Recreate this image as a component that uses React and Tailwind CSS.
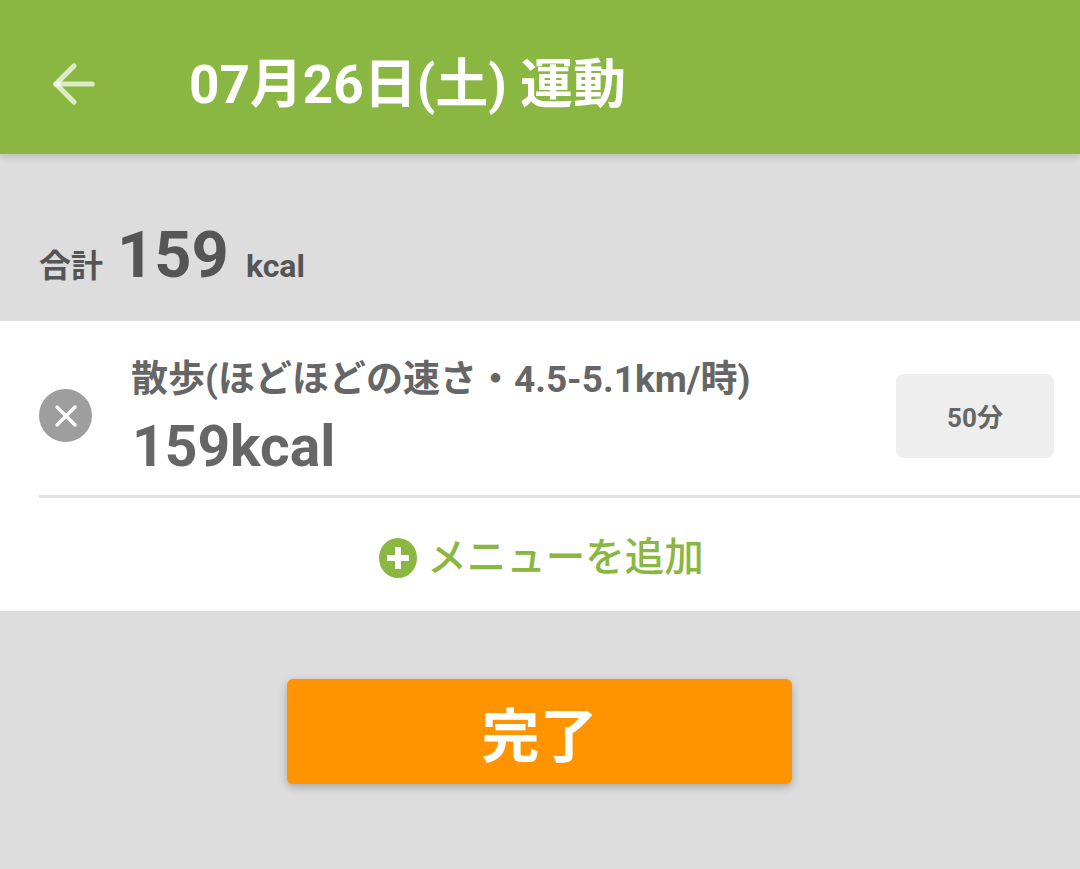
import { ArrowLeft } from "lucide-react";

const fontStack = "font-['Roboto','Noto_Sans_CJK_JP',sans-serif]";

export default function App() {
  return (
    <div className={`${fontStack} flex h-[869px] w-[1080px] flex-col overflow-hidden bg-[#dddddd]`}>
      {/* Header */}
      <header className="relative z-10 flex h-[154px] shrink-0 items-center bg-[#8ab742] shadow-[0_3px_8px_rgba(0,0,0,0.15)]">
        <div className="flex w-[189px] shrink-0 pl-[43px] pt-[14px]">
          <ArrowLeft size={62} strokeWidth={2} className="text-white/70" />
        </div>
        <h1 className="pt-[16px] text-[53px] font-bold leading-none text-white">07月26日(土) 運動</h1>
      </header>

      {/* Total */}
      <div className="flex h-[167px] shrink-0 items-baseline pl-[39px] pt-[69px] font-bold text-[#555555]">
        <span className="text-[32px]">合計</span>
        <span className="ml-[14px] text-[65px] leading-none">159</span>
        <span className="ml-[17px] text-[32px]">kcal</span>
      </div>

      {/* List */}
      <section className="bg-white">
        <div className="flex h-[174px] items-center pl-[39px] pr-[26px] pt-[15px]">
          <button className="flex h-[53px] w-[53px] shrink-0 items-center justify-center rounded-full bg-[#9e9e9e]">
            <svg width="24" height="24" viewBox="0 0 24 24" fill="none" stroke="white" strokeWidth="3.4" strokeLinecap="round">
              <path d="M3 3L21 21M21 3L3 21" />
            </svg>
          </button>
          <div className="ml-[39px] min-w-0 flex-1 font-bold text-[#666666]">
            <div className="whitespace-nowrap text-[37px] leading-[50px]">散歩(ほどほどの速さ・4.5-5.1km/時)</div>
            <div className="-mb-[3px] mt-[9px] ml-[1px] text-[57px] leading-[66px]">159kcal</div>
          </div>
          <div className="flex h-[84px] w-[158px] shrink-0 items-center justify-center rounded-[8px] bg-[#eeeeee] pt-[5px] text-[26px] font-bold text-[#666666]">
            50分
          </div>
        </div>
        <div className="ml-[39px] h-[3px] bg-[#e2e2e2]" />
        <div className="flex h-[113px] items-center justify-center pl-[3px] pt-[6px]">
          <svg width="38" height="40" viewBox="0 0 38 40" className="mr-[10px]">
            <ellipse cx="19" cy="20" rx="19" ry="20" fill="#8ab742" />
            <path d="M19 9V31M8 20H30" stroke="white" strokeWidth="6" />
          </svg>
          <span className="text-[39.5px] font-medium leading-none text-[#8ab742]">メニューを追加</span>
        </div>
      </section>

      {/* Done */}
      <div className="flex justify-center pr-[1px] pt-[68px]">
        <button className="flex h-[105px] w-[505px] items-center justify-center rounded-[6px] bg-[#ff9300] pt-[12px] text-[58px] font-bold text-white shadow-[0_3px_8px_rgba(0,0,0,0.25)]">
          完了
        </button>
      </div>
    </div>
  );
}
